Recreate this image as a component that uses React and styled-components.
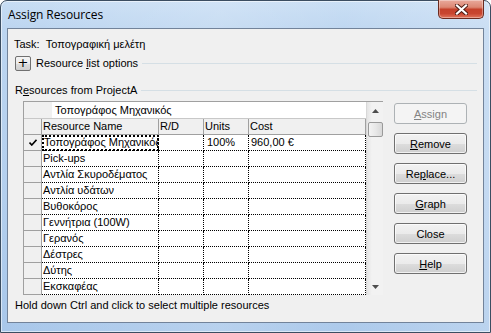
import React from 'react';
import styled, { createGlobalStyle } from 'styled-components';

const Global = createGlobalStyle`
  html, body { margin: 0; padding: 0; background: #ffffff; }
  body {
    width: 491px; height: 333px; overflow: hidden;
    font-family: "Liberation Sans", Arial, sans-serif;
    font-size: 11px; color: #000;
  }
  * { box-sizing: border-box; }
`;

const Window = styled.div`
  width: 491px;
  height: 333px;
  display: flex;
  flex-direction: column;
  padding: 0 6px 9px 6px;
  border: 1px solid #3b4d61;
  border-radius: 7px 7px 0 0;
  background:
    linear-gradient(90deg, rgba(255,255,255,0.0) 0%, rgba(255,255,255,0.18) 45%, rgba(255,255,255,0.05) 70%, rgba(255,255,255,0.22) 100%),
    linear-gradient(180deg, #c7ddf4 0%, #bcd5f0 28px, #b3cfee 60%, #a8c7ea 100%);
  box-shadow: inset 0 0 0 1px rgba(255,255,255,0.55);
`;

const TitleBar = styled.div`
  height: 27px;
  display: flex;
  align-items: flex-start;
  justify-content: space-between;
`;

const Title = styled.div`
  font-family: "Open Sans", "Noto Sans", sans-serif;
  font-size: 12px;
  line-height: 27px;
  padding-left: 1px;
  color: #000;
  letter-spacing: -0.1px;
`;

const CloseButton = styled.div`
  width: 46px;
  height: 19px;
  margin-top: -1px;
  display: flex;
  align-items: center;
  justify-content: center;
  border: 1px solid #6b2a1f;
  border-top: none;
  border-radius: 0 0 5px 5px;
  background: linear-gradient(180deg, #e9a99c 0%, #dc8773 40%, #c5412b 52%, #c8452f 75%, #e0755c 100%);
  box-shadow: inset 0 0 0 1px rgba(255,255,255,0.35);
`;

const Client = styled.div`
  flex: 1;
  display: flex;
  flex-direction: column;
  border: 1px solid #72839a;
  background: #f0f0f0;
  padding: 8px 0 0 6px;
`;

const TextLine = styled.div`
  height: 15px;
  line-height: 15px;
  white-space: nowrap;
`;

const OptionsRow = styled.div`
  margin-top: 4px;
  height: 14px;
  display: flex;
  align-items: center;
  padding-left: 1px;
`;

const PlusBox = styled.div`
  width: 16px;
  height: 15px;
  border: 1px solid #707070;
  border-radius: 2px;
  background: linear-gradient(180deg, #f4f4f4 0%, #ebebeb 50%, #dddddd 51%, #cfcfcf 100%);
  display: flex;
  align-items: center;
  justify-content: center;
  font-size: 13px;
  line-height: 1;
  font-family: "DejaVu Sans", sans-serif;
  padding-bottom: 1px;
`;

const GroupLabel = styled.div`
  white-space: nowrap;
  line-height: 14px;
  margin-left: ${p => p.$gap || 0}px;
`;

const EtchLine = styled.div`
  flex: 1;
  height: 1px;
  margin: 0 6px 0 4px;
  background: #d5dfe5;
`;

const SectionRow = styled.div`
  margin-top: 13px;
  height: 14px;
  display: flex;
  align-items: center;
  padding-left: 1px;
`;

const Body = styled.div`
  margin-top: 4px;
  display: flex;
  align-items: flex-start;
`;

const GridFrame = styled.div`
  margin-left: 9px;
  width: 360px;
  height: 194px;
  display: flex;
  border-left: 1px solid #a0a0a0;
  border-top: 1px solid #a0a0a0;
  background: #fff;
`;

const GridMain = styled.div`
  width: 342px;
  display: flex;
  flex-direction: column;
`;

const EditRow = styled.div`
  height: 17px;
  display: flex;
  border-bottom: 1px solid #c8c8c8;
`;

const EditGutter = styled.div`
  width: 28px;
  background: #f0f0f0;
`;

const EditBox = styled.div`
  flex: 1;
  padding-left: 3px;
  line-height: 16px;
  background: #fff;
  white-space: nowrap;
`;

const Row = styled.div`
  display: grid;
  grid-template-columns: 18px 117px 45px 45px 117px;
  height: 16px;
`;

const RowHead = styled.div`
  background: #f0f0f0;
  border-right: 1px solid #a0a0a0;
  border-bottom: 1px solid #a0a0a0;
  display: flex;
  align-items: center;
  justify-content: center;
`;

const HeadCell = styled.div`
  background: #f0f0f0;
  border-right: 1px solid #a0a0a0;
  border-bottom: 1px solid #a0a0a0;
  padding-left: 1px;
  line-height: 15px;
  white-space: nowrap;
  overflow: hidden;
`;

const Cell = styled.div`
  position: relative;
  border-right: 1px dotted #000;
  border-bottom: 1px dotted #000;
  padding-left: ${p => p.$pad ?? 1}px;
  line-height: 15px;
  white-space: nowrap;
  overflow: hidden;
  ${p => p.$focus ? `
    outline: 2px dotted #000;
    outline-offset: -2px;
    padding-left: 2px;
  ` : ''}
`;

const ScrollBar = styled.div`
  width: 17px;
  height: 193px;
  display: flex;
  flex-direction: column;
  border-left: 1px solid #d8d8d8;
  background: linear-gradient(90deg, #e4e4e4 0%, #f2f2f2 30%, #f2f2f2 100%);
`;

const ScrollArrow = styled.div`
  height: 17px;
  display: flex;
  align-items: center;
  justify-content: center;
`;

const Track = styled.div`
  flex: 1;
  padding-top: 3px;
  display: flex;
  flex-direction: column;
  align-items: center;
`;

const Thumb = styled.div`
  width: 15px;
  height: 15px;
  border: 1px solid #9a9a9a;
  border-radius: 2px;
  background: linear-gradient(90deg, #f3f3f3 0%, #e8e8e8 50%, #d8d8d8 100%);
`;

const ButtonCol = styled.div`
  margin-left: 11px;
  padding-top: 2px;
  display: flex;
  flex-direction: column;
  gap: 9px;
`;

const Button = styled.div`
  width: 73px;
  height: 21px;
  border: 1px solid ${p => p.$disabled ? '#adb2b5' : '#707070'};
  border-radius: 3px;
  display: flex;
  align-items: center;
  justify-content: center;
  color: ${p => p.$disabled ? '#838383' : '#000'};
  background: ${p => p.$disabled
    ? '#f4f4f4'
    : 'linear-gradient(180deg, #f2f2f2 0%, #ebebeb 50%, #dddddd 51%, #cfcfcf 100%)'};
  box-shadow: ${p => p.$disabled ? 'none' : 'inset 0 0 0 1px rgba(255,255,255,0.7)'};
  white-space: nowrap;
`;

const Footer = styled.div`
  margin-top: 3px;
  padding-left: 1px;
  height: 15px;
  line-height: 15px;
  white-space: nowrap;
`;

const U = styled.span`
  text-decoration: underline;
  text-underline-offset: 1px;
`;

const Check = () => (
  <svg width="8" height="7" viewBox="0 0 8 7">
    <path d="M0.5 3.5 L2.8 6 L7.5 0.8" fill="none" stroke="#000" strokeWidth="1.6" />
  </svg>
);

const CloseX = () => (
  <svg width="13" height="11" viewBox="0 0 13 11">
    <path d="M2 1.5 L11 9.5 M11 1.5 L2 9.5" stroke="#4a1a12" strokeWidth="4" strokeLinecap="square" />
    <path d="M2 1.5 L11 9.5 M11 1.5 L2 9.5" stroke="#ffffff" strokeWidth="2.2" strokeLinecap="square" />
  </svg>
);

const UpArrow = () => (
  <svg width="7" height="4" viewBox="0 0 7 4"><path d="M0 4 L3.5 0 L7 4 Z" fill="#4d4d4d" /></svg>
);
const DownArrow = () => (
  <svg width="7" height="4" viewBox="0 0 7 4"><path d="M0 0 L3.5 4 L7 0 Z" fill="#4d4d4d" /></svg>
);

const resources = [
  { name: 'Τοπογράφος Μηχανικός', units: '100%', cost: '960,00 €', checked: true },
  { name: 'Pick-ups' },
  { name: 'Αντλία Σκυροδέματος' },
  { name: 'Αντλία υδάτων' },
  { name: 'Βυθοκόρος' },
  { name: 'Γεννήτρια (100W)' },
  { name: 'Γερανός' },
  { name: 'Δέστρες' },
  { name: 'Δύτης' },
  { name: 'Εκσκαφέας' },
];

export default function App() {
  return (
    <>
      <Global />
      <Window>
        <TitleBar>
          <Title>Assign Resources</Title>
          <CloseButton><CloseX /></CloseButton>
        </TitleBar>
        <Client>
          <TextLine>Task:&nbsp; Τοπογραφική μελέτη</TextLine>
          <OptionsRow>
            <PlusBox>+</PlusBox>
            <GroupLabel $gap={5}>Resource <U>l</U>ist options</GroupLabel>
            <EtchLine />
          </OptionsRow>
          <SectionRow>
            <GroupLabel>R<U>e</U>sources from ProjectA</GroupLabel>
            <EtchLine />
          </SectionRow>
          <Body>
            <GridFrame>
              <GridMain>
                <EditRow>
                  <EditGutter />
                  <EditBox>Τοπογράφος Μηχανικός</EditBox>
                </EditRow>
                <Row>
                  <RowHead />
                  <HeadCell>Resource Name</HeadCell>
                  <HeadCell>R/D</HeadCell>
                  <HeadCell>Units</HeadCell>
                  <HeadCell>Cost</HeadCell>
                </Row>
                {resources.map((r, i) => (
                  <Row key={i}>
                    <RowHead>{r.checked ? <Check /> : null}</RowHead>
                    <Cell $focus={i === 0}>{r.name}</Cell>
                    <Cell />
                    <Cell $pad={3}>{r.units || ''}</Cell>
                    <Cell $pad={2}>{r.cost || ''}</Cell>
                  </Row>
                ))}
              </GridMain>
              <ScrollBar>
                <ScrollArrow><UpArrow /></ScrollArrow>
                <Track><Thumb /></Track>
                <ScrollArrow><DownArrow /></ScrollArrow>
              </ScrollBar>
            </GridFrame>
            <ButtonCol>
              <Button $disabled><U>A</U>ssign</Button>
              <Button><U>R</U>emove</Button>
              <Button>Re<U>p</U>lace...</Button>
              <Button><U>G</U>raph</Button>
              <Button>Close</Button>
              <Button><U>H</U>elp</Button>
            </ButtonCol>
          </Body>
          <Footer>Hold down Ctrl and click to select multiple resources</Footer>
        </Client>
      </Window>
    </>
  );
}
